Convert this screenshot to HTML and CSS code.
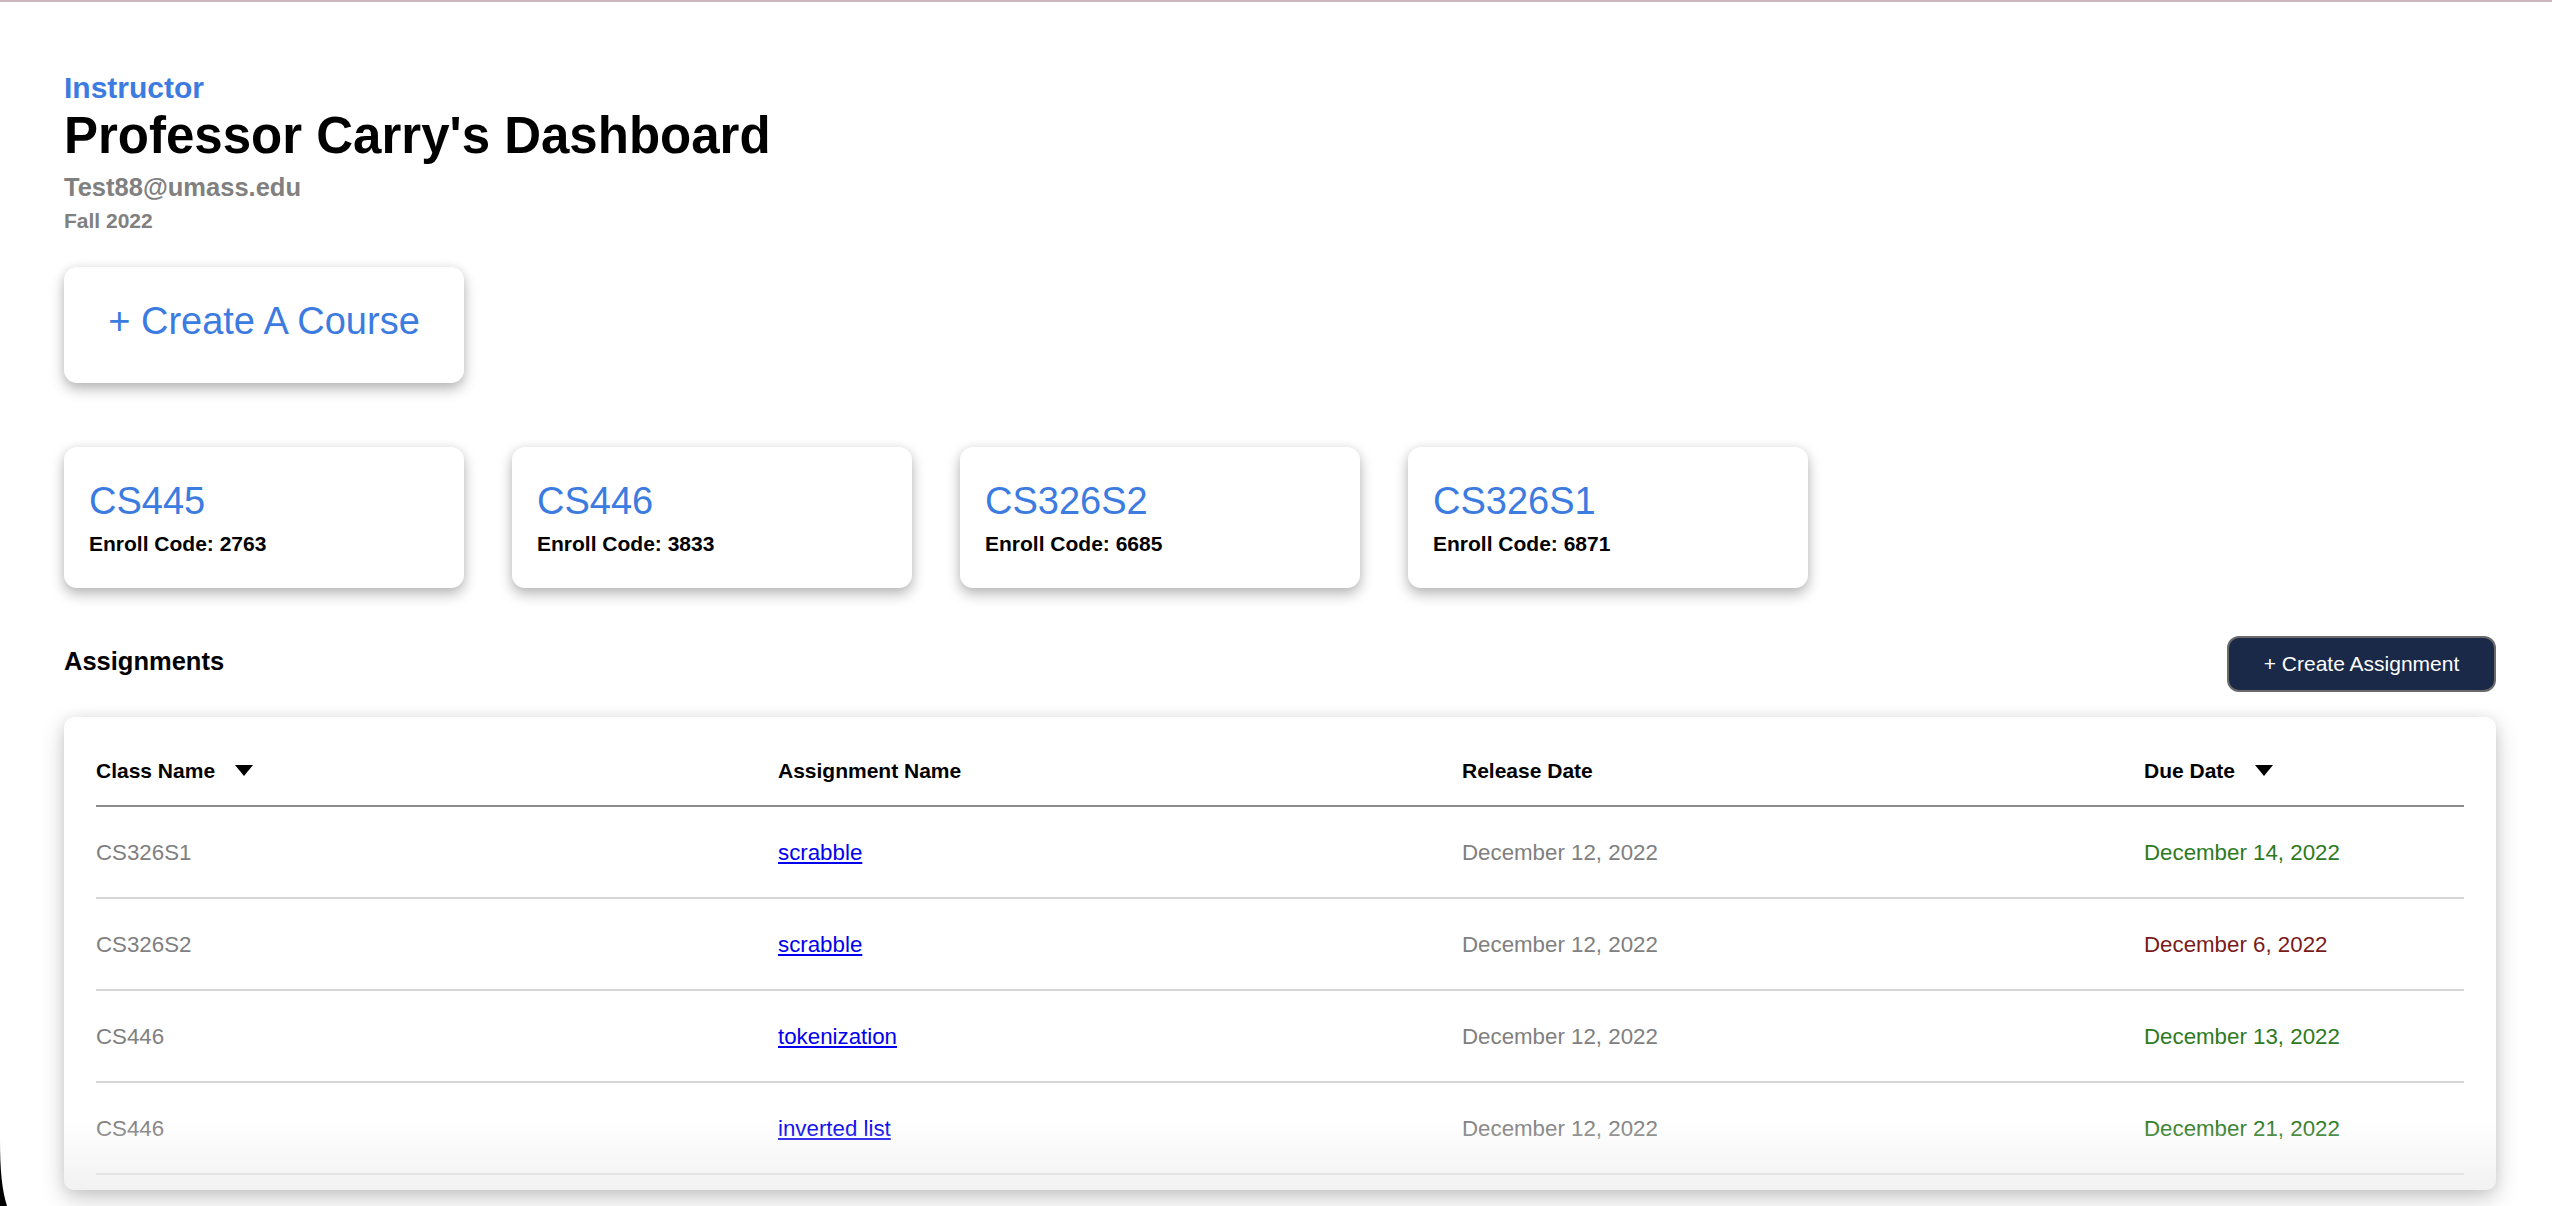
FILE: index.html
```html
<!DOCTYPE html>
<html lang="en">
<head>
<meta charset="utf-8">
<title>Professor Carry's Dashboard</title>
<link rel="stylesheet" href="styles.css">
</head>
<body>
<div class="page">
  <header class="intro">
    <div class="role">Instructor</div>
    <h1 class="title">Professor Carry's Dashboard</h1>
    <div class="email">Test88@umass.edu</div>
    <div class="term">Fall 2022</div>
  </header>

  <button class="create-course">+ Create A Course</button>

  <div class="courses">
    <div class="course-card">
      <div class="course-code">CS445</div>
      <div class="enroll">Enroll Code: 2763</div>
    </div>
    <div class="course-card">
      <div class="course-code">CS446</div>
      <div class="enroll">Enroll Code: 3833</div>
    </div>
    <div class="course-card">
      <div class="course-code">CS326S2</div>
      <div class="enroll">Enroll Code: 6685</div>
    </div>
    <div class="course-card">
      <div class="course-code">CS326S1</div>
      <div class="enroll">Enroll Code: 6871</div>
    </div>
  </div>

  <div class="assign-bar">
    <h2 class="assign-title">Assignments</h2>
    <button class="create-assign">+ Create Assignment</button>
  </div>

  <div class="table-card">
    <div class="thead">
      <div class="th">Class Name <svg class="sort" width="18" height="11" viewBox="0 0 18 11"><polygon points="0,0 18,0 9,11" fill="#000"/></svg></div>
      <div class="th">Assignment Name</div>
      <div class="th">Release Date</div>
      <div class="th">Due Date <svg class="sort" width="18" height="11" viewBox="0 0 18 11"><polygon points="0,0 18,0 9,11" fill="#000"/></svg></div>
    </div>
    <div class="row">
      <div class="cell muted">CS326S1</div>
      <div class="cell"><a class="link" href="#">scrabble</a></div>
      <div class="cell muted">December 12, 2022</div>
      <div class="cell due-ok">December 14, 2022</div>
    </div>
    <div class="row">
      <div class="cell muted">CS326S2</div>
      <div class="cell"><a class="link" href="#">scrabble</a></div>
      <div class="cell muted">December 12, 2022</div>
      <div class="cell due-late">December 6, 2022</div>
    </div>
    <div class="row">
      <div class="cell muted">CS446</div>
      <div class="cell"><a class="link" href="#">tokenization</a></div>
      <div class="cell muted">December 12, 2022</div>
      <div class="cell due-ok">December 13, 2022</div>
    </div>
    <div class="row">
      <div class="cell muted">CS446</div>
      <div class="cell"><a class="link" href="#">inverted list</a></div>
      <div class="cell muted">December 12, 2022</div>
      <div class="cell due-ok">December 21, 2022</div>
    </div>
  </div>
</div>
<svg class="corner" width="8" height="66" viewBox="0 0 8 66"><path d="M0 0 C0 30 2 50 7 66 L0 66 Z" fill="#000"/></svg>
</body>
</html>
```

FILE: styles.css
```css
html, body {
  margin: 0;
  padding: 0;
  background: #ffffff;
}

body {
  border-top: 2px solid #cab6bd;
  font-family: "Liberation Sans", Arial, Helvetica, sans-serif;
  color: #000;
  overflow: hidden;
  height: 1204px;
  position: relative;
}

.page {
  padding: 69px 56px 0 64px;
  display: flex;
  flex-direction: column;
  align-items: flex-start;
}

.intro {
  display: flex;
  flex-direction: column;
}

.role {
  color: #3c7be0;
  font-weight: bold;
  font-size: 30px;
  line-height: 1.15;
}

.title {
  margin: 0;
  font-size: 51px;
  line-height: 1.17;
  font-weight: bold;
}

.email {
  margin-top: 8px;
  font-size: 25.5px;
  line-height: 1.15;
  font-weight: bold;
  color: #808080;
}

.term {
  margin-top: 7px;
  font-size: 21px;
  line-height: 1.15;
  font-weight: bold;
  color: #808080;
}

.create-course {
  margin-top: 33px;
  width: 400px;
  height: 116px;
  border: none;
  border-radius: 13px;
  background: #fff;
  box-shadow: 0 6px 14px rgba(0, 0, 0, 0.28), 0 0 10px rgba(0, 0, 0, 0.06);
  font-family: inherit;
  font-size: 38px;
  color: #3c7be0;
  padding: 0 0 6px 0;
  cursor: pointer;
}

.courses {
  margin-top: 64px;
  display: flex;
  gap: 48px;
}

.course-card {
  box-sizing: border-box;
  width: 400px;
  height: 141px;
  padding: 33px 25px 31px;
  border-radius: 13px;
  background: #fff;
  box-shadow: 0 6px 14px rgba(0, 0, 0, 0.28), 0 0 10px rgba(0, 0, 0, 0.06);
}

.course-code {
  font-size: 38px;
  line-height: 1.15;
  color: #3c7be0;
}

.enroll {
  margin-top: 9px;
  font-size: 21px;
  line-height: 1.15;
  font-weight: bold;
}

.assign-bar {
  align-self: stretch;
  margin-top: 48px;
  height: 56px;
  display: flex;
  justify-content: space-between;
  align-items: center;
}

.assign-title {
  margin: 0 0 4px 0;
  font-size: 25.5px;
  line-height: 1.15;
  font-weight: bold;
}

.create-assign {
  box-sizing: border-box;
  width: 269px;
  height: 56px;
  background: #1b2949;
  color: #fff;
  border: 2px solid #6a6a6a;
  border-radius: 12px;
  font-family: inherit;
  font-size: 21px;
  padding: 0;
  cursor: pointer;
}

.table-card {
  align-self: stretch;
  position: relative;
  margin-top: 25px;
  box-sizing: border-box;
  height: 473px;
  padding: 0 32px;
  border-radius: 10px;
  background: #fff;
  box-shadow: 0 8px 22px rgba(0, 0, 0, 0.22), 0 0 12px rgba(0, 0, 0, 0.06);
  overflow: hidden;
}

.table-card::after {
  content: "";
  position: absolute;
  left: 0;
  right: 0;
  bottom: 0;
  height: 70px;
  background: linear-gradient(to bottom, rgba(240, 240, 240, 0), rgba(238, 238, 238, 0.8));
  pointer-events: none;
}

.thead,
.row {
  display: grid;
  grid-template-columns: 682px 684px 682px 1fr;
  box-sizing: border-box;
}

.thead {
  height: 90px;
  padding-top: 42px;
  border-bottom: 2px solid #8c8c8c;
}

.th {
  font-size: 21px;
  line-height: 1.15;
  font-weight: bold;
  display: flex;
  align-items: center;
  height: 24px;
}

.sort {
  margin-left: 20px;
}

.row {
  height: 92px;
  align-items: center;
  border-bottom: 2px solid #d6d6d6;
}

.cell {
  font-size: 22.3px;
  line-height: 1.15;
  padding-top: 2px;
}

.muted {
  color: #808080;
}

.link {
  color: #0000ee;
  text-decoration: underline;
}

.due-ok {
  color: #2d7a1f;
}

.due-late {
  color: #7a1a1a;
}

.corner {
  position: absolute;
  left: 0;
  bottom: 0;
  display: block;
}
```
